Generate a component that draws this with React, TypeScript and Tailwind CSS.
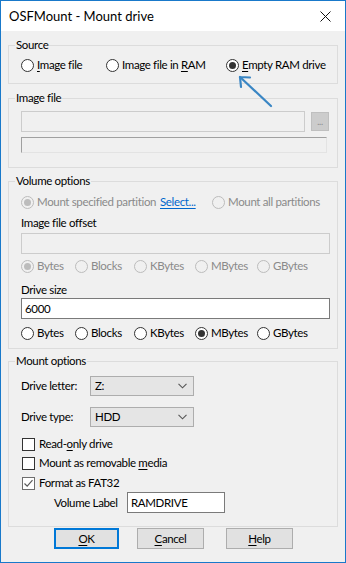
import React from "react";

const Radio = ({ checked = false, disabled = false }: { checked?: boolean; disabled?: boolean }) => (
  <span
    className={
      disabled
        ? "w-[13px] h-[13px] shrink-0 rounded-full border border-[#bcbcbc] bg-[#f0f0f0] flex items-center justify-center"
        : "w-[13px] h-[13px] shrink-0 rounded-full border border-[#333333] bg-white flex items-center justify-center"
    }
  >
    {checked && (
      <span className={disabled ? "w-[7px] h-[7px] rounded-full bg-[#bcbcbc]" : "w-[7px] h-[7px] rounded-full bg-[#333333]"} />
    )}
  </span>
);

const RadioItem = ({
  label,
  checked,
  disabled,
  w,
}: {
  label: React.ReactNode;
  checked?: boolean;
  disabled?: boolean;
  w: string;
}) => (
  <div className={`flex items-center h-[14px] shrink-0 whitespace-nowrap ${w}`}>
    <Radio checked={checked} disabled={disabled} />
    <span className={disabled ? "ml-[3px] text-[#8a8a8a]" : "ml-[3px] text-black"}>{label}</span>
  </div>
);

const Check = ({ checked = false, grey = false }: { checked?: boolean; grey?: boolean }) => (
  <span
    className={
      grey
        ? "w-[13px] h-[13px] shrink-0 border border-[#6e6e6e] bg-white flex items-center justify-center"
        : "w-[13px] h-[13px] shrink-0 border border-[#333333] bg-white flex items-center justify-center"
    }
  >
    {checked && (
      <svg width="11" height="11" viewBox="0 0 11 11">
        <path d="M1.5 5.5 L4.2 8.2 L9.5 2.2" fill="none" stroke="#5a5a5a" strokeWidth="1.2" />
      </svg>
    )}
  </span>
);

const Chevron = () => (
  <svg width="9" height="6" viewBox="0 0 9 6">
    <path d="M0.5 0.8 L4.5 4.8 L8.5 0.8" fill="none" stroke="#555555" strokeWidth="1.1" />
  </svg>
);

const Select = ({ value }: { value: string }) => (
  <div className="w-[104px] h-[20px] border border-[#adadad] bg-[#e5e5e5] flex items-center justify-between pl-[4px] pr-[6px]">
    <span>{value}</span>
    <Chevron />
  </div>
);

const U = ({ children }: { children: React.ReactNode }) => <span className="underline underline-offset-[2px]">{children}</span>;

const Legend = ({ children }: { children: React.ReactNode }) => (
  <legend className="ml-[6px] px-[1px] text-[11.5px] leading-[14px]">{children}</legend>
);

const unitX = ["w-[54px]", "w-[59px]", "w-[61px]", "w-[62px]", "w-[70px]"];
const units = ["Bytes", "Blocks", "KBytes", "MBytes", "GBytes"];

export default function App() {
  return (
    <div
      className="relative w-[346px] h-[563px] border border-[#1979ca] bg-[#f0f0f0] flex flex-col text-[11.5px] leading-[14px] tracking-[-0.35px] text-black whitespace-nowrap"
      style={{ fontFamily: "Lato, 'Noto Sans', sans-serif" }}
    >
      {/* Title bar */}
      <div className="h-[30px] bg-white flex items-center justify-between pl-[8px] pr-[14px] shrink-0 tracking-normal">
        <span className="text-[13px]">OSFMount - Mount drive</span>
        <svg width="11" height="11" viewBox="0 0 11 11">
          <path d="M0.5 0.5 L10.5 10.5 M10.5 0.5 L0.5 10.5" stroke="#111111" strokeWidth="1" />
        </svg>
      </div>

      <div className="flex flex-col px-[7px] pt-[7px]">
        {/* Source */}
        <fieldset className="border border-[#dcdcdc]">
          <Legend>Source</Legend>
          <div className="flex pt-[6px] pb-[11px] pl-[12px]">
            <RadioItem w="w-[85px]" label={<><U>I</U>mage file</>} />
            <RadioItem w="w-[120px]" label={<>Image file in <U>R</U>AM</>} />
            <RadioItem w="w-[100px]" checked label={<><U>E</U>mpty RAM drive</>} />
          </div>
        </fieldset>

        {/* Image file */}
        <fieldset className="border border-[#dcdcdc] mt-[7px]">
          <Legend>Image file</Legend>
          <div className="flex flex-col pt-[6px] pb-[14px] pl-[12px]">
            <div className="flex items-start">
              <div className="w-[284px] h-[21px] border border-[#cccccc] bg-[#f0f0f0]" />
              <div className="ml-[6px] mt-[1px] w-[18px] h-[19px] border border-[#bfbfbf] bg-[#cccccc] flex items-center justify-center text-[9px] text-[#8a8a8a]">
                ...
              </div>
            </div>
            <div className="mt-[5px] w-[306px] h-[16px] border-t border-l border-t-[#a0a0a0] border-l-[#a0a0a0] border-r border-b border-r-[#e3e3e3] border-b-[#e3e3e3] bg-[#f0f0f0]" />
          </div>
        </fieldset>

        {/* Volume options */}
        <fieldset className="border border-[#dcdcdc] mt-[6px]">
          <Legend>Volume options</Legend>
          <div className="flex flex-col pt-[7px] pb-[8px] pl-[12px]">
            <div className="flex items-center h-[14px]">
              <RadioItem w="w-[139px]" checked disabled label="Mount specified partition" />
              <span className="w-[52px] shrink-0">
                <span className="text-[#0066cc] underline underline-offset-[2px]">Select...</span>
              </span>
              <RadioItem w="w-auto" disabled label="Mount all partitions" />
            </div>
            <div className="mt-[7px] h-[14px]">Image file offset</div>
            <div className="mt-[3px] w-[309px] h-[21px] border border-[#cccccc] bg-[#f0f0f0]" />
            <div className="mt-[5px] flex">
              {units.map((u, i) => (
                <RadioItem key={u} w={unitX[i]} disabled checked={i === 0} label={u} />
              ))}
            </div>
            <div className="mt-[10px] h-[14px]">Drive size</div>
            <div className="mt-[1px] w-[309px] h-[21px] border border-[#7a7a7a] bg-white flex items-center pl-[3px]">6000</div>
            <div className="mt-[7px] flex">
              {units.map((u, i) => (
                <RadioItem key={u} w={unitX[i]} checked={i === 3} label={u} />
              ))}
            </div>
          </div>
        </fieldset>

        {/* Mount options */}
        <fieldset className="border border-[#dcdcdc] mt-[5px]">
          <Legend>Mount options</Legend>
          <div className="flex flex-col pt-[8px] pb-[13px] pl-[12px]">
            <div className="flex items-center">
              <span className="w-[69px]">Drive letter:</span>
              <Select value="Z:" />
            </div>
            <div className="mt-[11px] flex items-center">
              <span className="w-[69px]">Drive type:</span>
              <Select value="HDD" />
            </div>
            <div className="mt-[10px] flex items-center h-[14px] pl-[1px]">
              <Check />
              <span className="ml-[4px]">Read-<U>o</U>nly drive</span>
            </div>
            <div className="mt-[5px] flex items-center h-[14px] pl-[1px]">
              <Check />
              <span className="ml-[4px]">Mount as removable <U>m</U>edia</span>
            </div>
            <div className="mt-[6px] flex items-center h-[14px] pl-[1px]">
              <Check checked grey />
              <span className="ml-[4px]">Format as FAT32</span>
            </div>
            <div className="mt-[2px] flex items-center">
              <span className="ml-[33px] w-[73px]">Volume Label</span>
              <div className="w-[98px] h-[21px] border border-[#7a7a7a] bg-white flex items-center pl-[3px]">RAMDRIVE</div>
            </div>
          </div>
        </fieldset>

        {/* Buttons */}
        <div className="mt-[1px] flex pl-[46px]">
          <div className="w-[65px] h-[21px] border-2 border-[#0078d7] bg-[#e1e1e1] flex items-center justify-center">
            <span><U>O</U>K</span>
          </div>
          <div className="ml-[18px] w-[67px] h-[21px] border border-[#adadad] bg-[#e1e1e1] flex items-center justify-center">
            <span><U>C</U>ancel</span>
          </div>
          <div className="ml-[22px] w-[67px] h-[21px] border border-[#adadad] bg-[#e1e1e1] flex items-center justify-center">
            <span><U>H</U>elp</span>
          </div>
        </div>
      </div>

      {/* Annotation arrow */}
      <svg className="absolute left-[233px] top-[70px] pointer-events-none" width="42" height="40" viewBox="0 0 42 40">
        <path d="M37 35 L6 6" stroke="#3a86c4" strokeWidth="2.2" strokeLinecap="round" fill="none" />
        <path d="M6 6 L7 16 M6 6 L16 6.5" stroke="#3a86c4" strokeWidth="2.2" strokeLinecap="round" fill="none" />
      </svg>
    </div>
  );
}
